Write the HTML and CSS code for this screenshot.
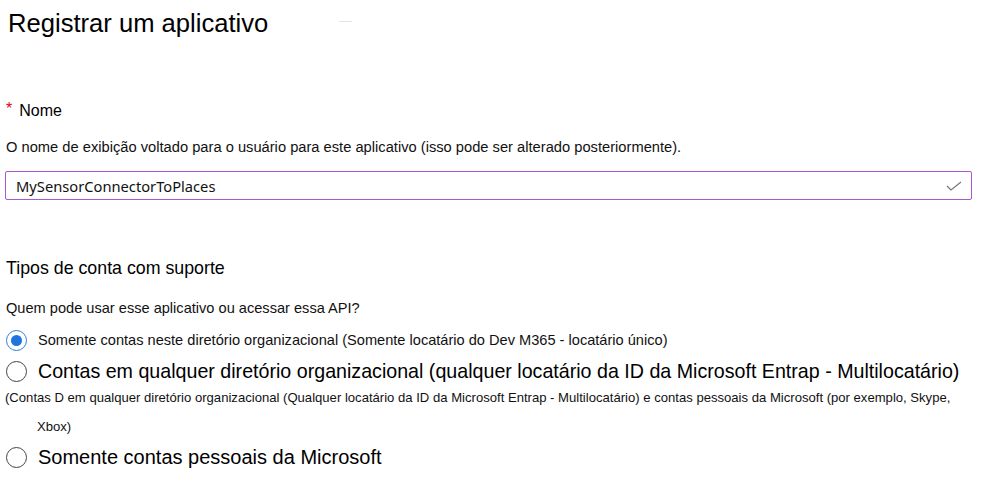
FILE: index.html
```html
<!DOCTYPE html>
<html lang="pt-BR">
<head>
<meta charset="utf-8">
<title>Registrar um aplicativo</title>
<link rel="stylesheet" href="styles.css">
</head>
<body>
<div class="page">
  <header class="head">
    <h1 class="title">Registrar um aplicativo</h1>
    <span class="dash"></span>
  </header>

  <section class="field">
    <div class="label"><span class="req">*</span><span>Nome</span></div>
    <p class="desc">O nome de exibição voltado para o usuário para este aplicativo (isso pode ser alterado posteriormente).</p>
    <div class="input">
      <span class="input-text">MySensorConnectorToPlaces</span>
      <svg class="check" width="16" height="10" viewBox="0 0 16 10"><path d="M1 5 L5 9 L15 1" fill="none" stroke="#777" stroke-width="1.2"/></svg>
    </div>
  </section>

  <section class="accounts">
    <h2 class="subtitle">Tipos de conta com suporte</h2>
    <p class="question">Quem pode usar esse aplicativo ou acessar essa API?</p>
    <div class="option opt-small">
      <span class="radio checked"><span class="dot"></span></span>
      <span class="opt-label small">Somente contas neste diretório organizacional (Somente locatário do Dev M365 - locatário único)</span>
    </div>
    <div class="option opt-big">
      <span class="radio"></span>
      <span class="opt-label big">Contas em qualquer diretório organizacional (qualquer locatário da ID da Microsoft Entrap - Multilocatário)</span>
    </div>
    <p class="note">(Contas D em qualquer diretório organizacional (Qualquer locatário da ID da Microsoft Entrap - Multilocatário) e contas pessoais da Microsoft (por exemplo, Skype,</p>
    <p class="note note-indent">Xbox)</p>
    <div class="option opt-big last">
      <span class="radio"></span>
      <span class="opt-label big last-label">Somente contas pessoais da Microsoft</span>
    </div>
  </section>
</div>
</body>
</html>
```

FILE: styles.css
```css
* { box-sizing: border-box; }
html, body { margin: 0; padding: 0; background: #fff; }
body {
  font-family: "Liberation Sans", Arial, sans-serif;
  color: #000;
  width: 1000px;
  height: 487px;
  overflow: hidden;
}
.page { padding: 0 0 0 5px; }

.head {
  display: flex;
  align-items: center;
  height: 46px;
  padding-left: 3px;
}
.title {
  margin: 0;
  font-weight: normal;
  font-size: 25.6px;
  line-height: 30px;
}
.dash {
  width: 13px;
  height: 1px;
  background: #e4e4e4;
  margin-left: 71px;
  margin-top: -4px;
}

.field { padding-top: 55px; }
.label {
  display: flex;
  align-items: flex-start;
  font-size: 16px;
  height: 20px;
  line-height: 20px;
  padding-left: 1px;
}
.req { color: #e0001b; font-size: 16px; margin-right: 7px; line-height: 16px; }
.desc {
  margin: 17px 0 0 1px;
  font-size: 14.7px;
  line-height: 18px;
  color: #111;
}
.input {
  margin-top: 15px;
  width: 967px;
  height: 29px;
  border: 1px solid #a958cf;
  border-radius: 2px;
  display: flex;
  align-items: center;
  justify-content: space-between;
  padding: 0 9px 0 10px;
}
.input-text {
  font-family: "Noto Sans", "Open Sans", sans-serif;
  font-size: 14.7px;
  color: #111;
}
.check { display: block; margin-top: 1px; }

.accounts { padding-top: 57px; }
.subtitle {
  margin: 0 0 0 1px;
  font-weight: normal;
  font-size: 17.8px;
  line-height: 22px;
}
.question {
  margin: 20px 0 0 1px;
  font-size: 14.6px;
  line-height: 18px;
  color: #111;
}
.option {
  display: flex;
  align-items: center;
  gap: 11px;
  padding-left: 1px;
}
.opt-small { margin-top: 12px; height: 22px; }
.opt-big { margin-top: 8px; height: 24px; }
.opt-big.last { margin-top: 10px; }
.radio {
  flex: none;
  width: 21px;
  height: 21px;
  border-radius: 50%;
  border: 1.3px solid #444;
  display: flex;
  align-items: center;
  justify-content: center;
}
.radio.checked { border: 1.6px solid #2a7fe0; }
.dot {
  width: 11px;
  height: 11px;
  border-radius: 50%;
  background: #1f74de;
}
.opt-label.small { font-size: 14.6px; color: #111; }
.opt-label.big { font-size: 19.65px; }
.opt-label.last-label { font-size: 20px; }
.note {
  margin: 7px 0 0 0;
  font-size: 13.1px;
  line-height: 16px;
  color: #111;
}
.note-indent { margin-top: 13px; padding-left: 32px; }
```
